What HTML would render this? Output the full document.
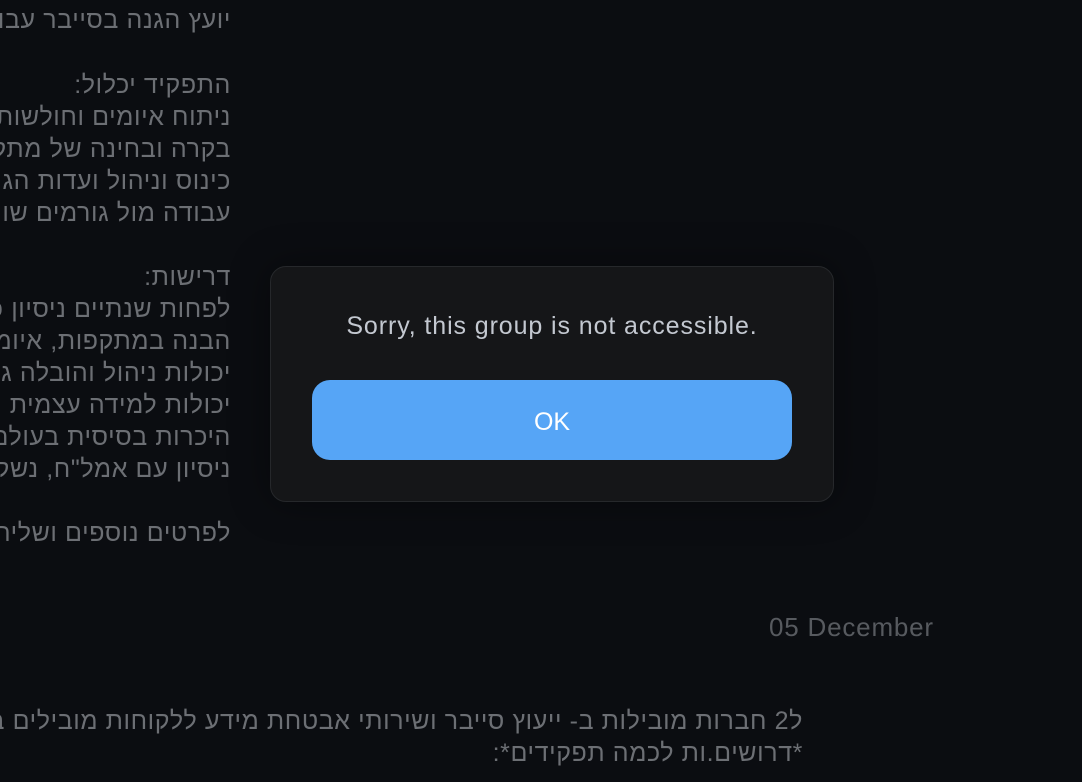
<!DOCTYPE html>
<html><head><meta charset="utf-8">
<style>
html,body{margin:0;padding:0;width:1082px;height:782px;overflow:hidden;background:#0b0d11;}
.t{position:absolute;white-space:nowrap;direction:rtl;text-align:right;color:#6c6f74;font-family:"Liberation Sans","Noto Sans CJK JP",sans-serif;font-size:25px;letter-spacing:0.6px;line-height:32px;}
.l{right:851px;}
.b{right:279px;}
.dlg{position:absolute;left:270px;top:266px;width:564px;height:236px;box-sizing:border-box;background:#151618;border:1px solid #26282b;border-radius:16px;box-shadow:0 0 40px rgba(0,0,0,0.4);}
.msg{position:absolute;left:0;right:0;top:43px;text-align:center;color:#c3c8d0;font-family:"Liberation Sans",sans-serif;font-size:25px;letter-spacing:0.9px;line-height:32px;}
.btn{position:absolute;left:41px;top:113px;width:480px;height:80px;background:#56a5f6;border-radius:18px;color:#fff;font-family:"Liberation Sans",sans-serif;font-size:25px;line-height:84px;text-align:center;}
</style></head><body>
<div class="t l" style="top:4px">יועץ הגנה בסייבר עבור חברה מובילה בתחום</div>
<div class="t l" style="top:69px">התפקיד יכלול:</div>
<div class="t l" style="top:101px">ניתוח איומים וחולשות במערכות הארגון</div>
<div class="t l" style="top:133px">בקרה ובחינה של מתקפות ואירועים</div>
<div class="t l" style="top:165px">כינוס וניהול ועדות הגנה בארגון</div>
<div class="t l" style="top:197px">עבודה מול גורמים שונים בארגון</div>
<div class="t l" style="top:261px">דרישות:</div>
<div class="t l" style="top:293px">לפחות שנתיים ניסיון כיועץ סייבר</div>
<div class="t l" style="top:325px">הבנה במתקפות, איומים וחולשות</div>
<div class="t l" style="top:357px">יכולות ניהול והובלה גבוהות מאוד</div>
<div class="t l" style="top:389px">יכולות למידה עצמית ועבודה בצוות</div>
<div class="t l" style="top:421px">היכרות בסיסית בעולם התקשורת</div>
<div class="t l" style="top:453px">ניסיון עם אמל"ח, נשק ומערכות</div>
<div class="t l" style="top:517px">לפרטים נוספים ושליחת קורות חיים</div>
<div class="t" style="left:769px;top:611px;direction:ltr;text-align:left;color:#575a5f;font-size:26px;letter-spacing:0.8px;">05 December</div>
<div class="t b" style="top:705px">ל2 חברות מובילות ב- ייעוץ סייבר ושירותי אבטחת מידע ללקוחות מובילים בשוק הישראלי והבינלאומי</div>
<div class="t b" style="top:737px">*דרושים.ות לכמה תפקידים*:</div>
<div class="dlg">
<div class="msg">Sorry, this group is not accessible.</div>
<div class="btn">OK</div>
</div>
</body></html>
